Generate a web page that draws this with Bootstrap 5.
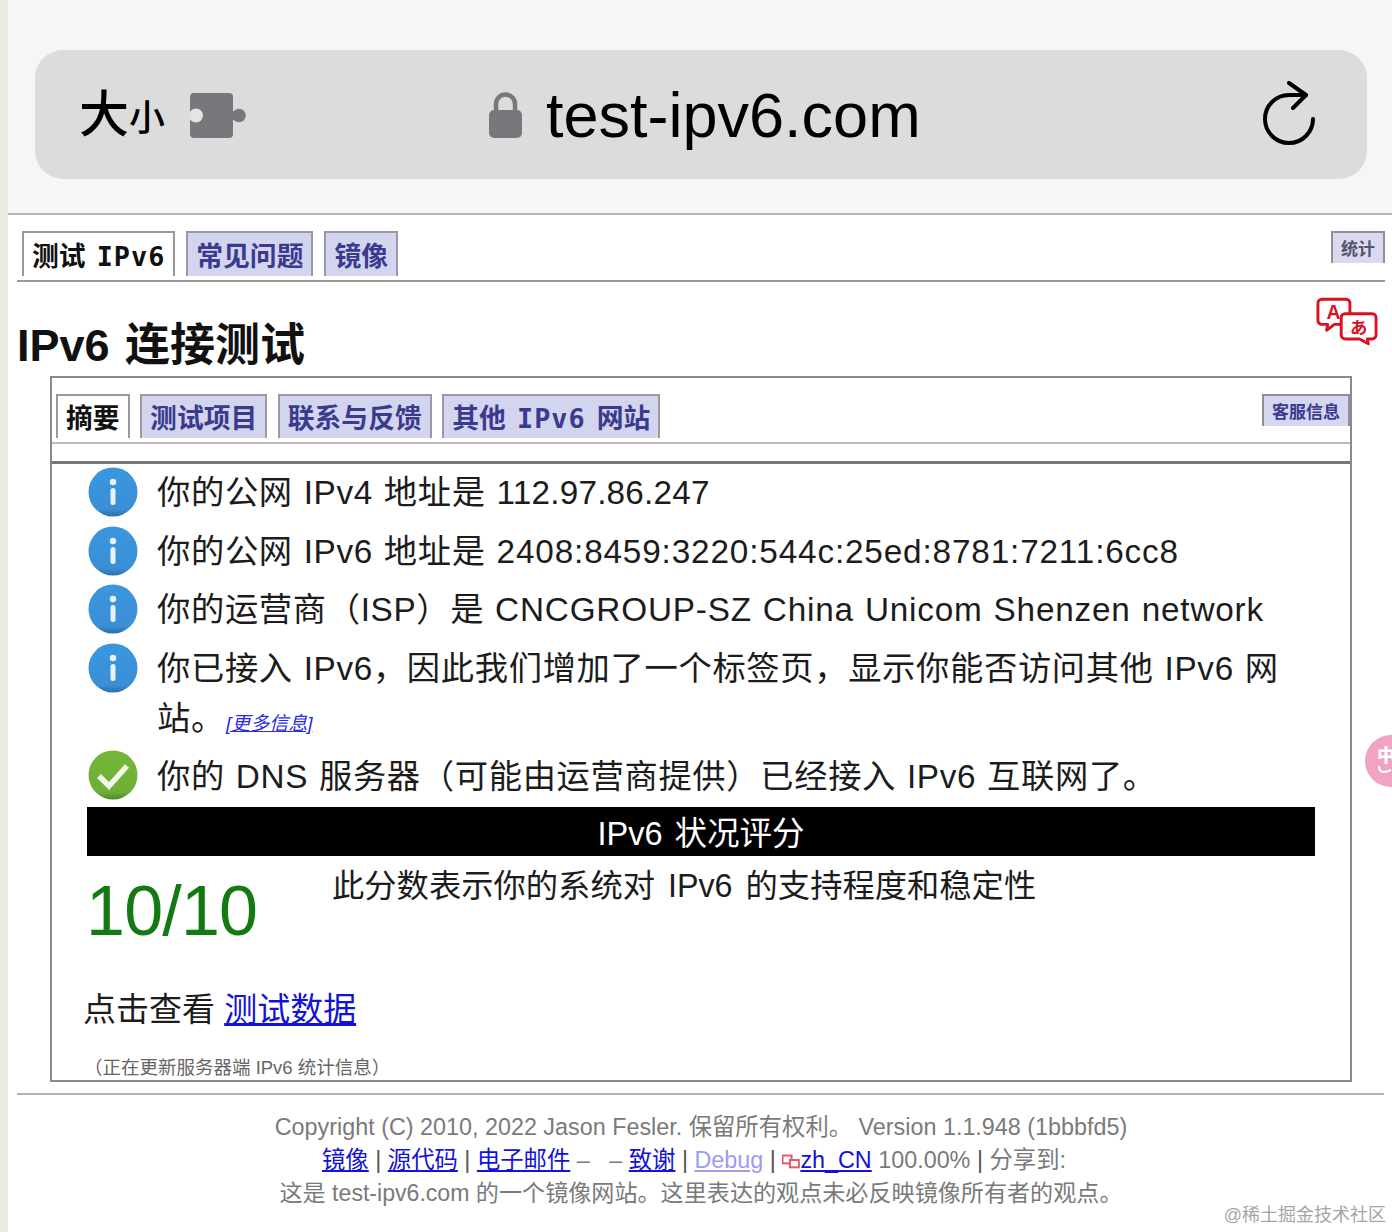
<!DOCTYPE html>
<html lang="zh-CN">
<head>
<meta charset="utf-8">
<title>test-ipv6.com</title>
<link href="https://cdn.jsdelivr.net/npm/bootstrap@5.3.0/dist/css/bootstrap.min.css" rel="stylesheet">
<style>
html,body{height:1232px;overflow:hidden}
body{background:#ece9e4;font-family:"Liberation Sans","Noto Sans CJK SC",sans-serif;color:#111;position:relative}
.page-wrap{margin-left:8px;background:#fff;height:1232px}
.chrome{height:215px;background:#f6f6f6;border-bottom:2px solid #b5b5b8;padding:50px 25px 0 27px}
.urlbar{height:129px;background:#dcdcdc;border-radius:28px;padding:0 48px 0 44px;position:relative}
.size-big{font-size:50px;line-height:1;color:#000;font-weight:500}
.size-small{font-size:36px;line-height:1;color:#000;margin-top:8px;font-weight:500}
.puzzle{margin-left:25px;margin-top:2px}
.addr{position:absolute;left:454px;top:1px;height:100%;gap:24px}
.addr span{font-size:63px;color:#000;line-height:1}
.tabline{border-bottom:2px solid #9a9a9e;gap:11px;align-items:flex-end}
.top-tabs{margin:16px 7px 0 9px;height:51px;padding:0 0 4px 5px}
.ttab{font-family:"DejaVu Sans Mono","Noto Sans CJK SC",monospace;font-size:26.8px;word-spacing:-5px;font-weight:700;height:45px;line-height:47px;padding:0 8px;border:2px solid #9a9aa6;border-bottom:0;background:#d3d4ee;color:#3a3a8e;white-space:nowrap}
.ttab.on{background:#fff;color:#111;border-color:#999}
.ttab .latin{letter-spacing:1px}
.mini{font-family:"Liberation Sans","Noto Sans CJK SC",sans-serif;margin-left:auto;align-self:flex-start;font-size:17px;font-weight:700;height:32px;line-height:34px;padding:0 8px;border:2px solid #8f8f9b;border-bottom:0;background:#d9daee;color:#55556f}
.head-row{margin:0 0 0 9px;height:94px;position:relative}
.head-row h1{font-family:"Liberation Sans","Noto Sans CJK SC",sans-serif;font-size:45px;word-spacing:3px;font-weight:700;line-height:1;padding-top:41px;margin:0;color:#111}
.lang{position:absolute;right:14px;top:15px}
.mainbox{margin:0 40px 0 42px;height:706px;border:2px solid #8a8a8a;position:relative}
.inner-tabs{padding:16px 0 0 4px;height:66px;border-bottom:2px solid #bdbdc2;align-items:flex-start;gap:10.500px}
.inner-tabs .ttab{height:44px;line-height:46px}
.inner-tabs .mini{height:32px;color:#3a3a8e;background:#d5d6f0}
.sep{height:20px;border-bottom:3px solid #77777a}
.msgs{padding:4px 35px 0 36px}
.msg{display:flex;font-size:33.3px;letter-spacing:.65px;word-spacing:1px;line-height:50px;margin-bottom:8.500px;color:#1c1c1c}
.msg svg{flex:none;margin-right:19px;margin-top:-1px}
.msg svg.ok-ic{margin-top:-2px}
.ip4{letter-spacing:.2px}
.ip6{letter-spacing:.85px}
.net{letter-spacing:.8px}
.more{font-size:19px;line-height:1;letter-spacing:0;font-style:italic;color:#2a2ae0;text-decoration:underline;margin-left:1px;white-space:nowrap}
.scorebar{background:#000;color:#fff;text-align:center;font-size:32.5px;word-spacing:3px;height:49px;line-height:54px;margin:-4px 35px 0 35px}
.score-row{margin:0 34px 0 34px;height:129px}
.score-num{width:246px;font-size:70px;color:#137a13;line-height:1;padding-top:20px;letter-spacing:-.8px}
.score-txt{font-size:32.3px;word-spacing:4px;line-height:1;padding-top:14px;color:#1c1c1c}
.clickrow{font-size:33px;line-height:50px;margin-left:31px;color:#1c1c1c}
.clickrow a,.foot a{color:#1212d8}
.updating{font-size:18.5px;color:#666;margin:21px 0 0 32px;line-height:24px}
.foot-line{margin:11px 0 0 9px;border-top:2px solid #b3b3b3;width:1367px}
.foot{text-align:center;font-size:23.35px;line-height:33px;color:#7a7a7a;padding:16px 0 0;width:1386px}
.foot .mid{padding-right:14px}
.foot .last{font-size:23.1px}
.pipe{color:#555}
.debug{color:#9c9cf0!important}
.wm{position:absolute;right:6px;top:1203px;font-size:18px;color:#a5a5a5;line-height:24px}
.cn-fab{position:absolute;left:1365px;top:735px;width:52px;height:52px;border-radius:50%;background:#f0a3c3;color:#fff;font-weight:700;padding:11px 0 0 12px}
.cn-fab b{display:block;font-size:18px;line-height:20px}
.cn-fab svg{display:block}
</style>
</head>
<body>
<div class="page-wrap">
  <div class="chrome">
    <div class="urlbar d-flex align-items-center">
      <span class="size-big">大</span><span class="size-small">小</span>
      <svg class="puzzle" width="56" height="45" viewBox="0 0 56 45"><rect x="0" y="0" width="43" height="45" rx="4" fill="#78787c"/><rect x="40" y="18" width="8" height="9" fill="#78787c"/><circle cx="49" cy="22.500" r="6.800" fill="#78787c"/><circle cx="6" cy="22.500" r="7" fill="#e4e4e4"/></svg>
      <div class="addr d-flex align-items-center">
        <svg width="33" height="47" viewBox="0 0 33 47"><path d="M7 20V12a9.500 9.500 0 0 1 19 0v8" fill="none" stroke="#78787c" stroke-width="4.500"/><rect x="0" y="18" width="33" height="28" rx="5" fill="#78787c"/></svg>
        <span>test-ipv6.com</span>
      </div>
      <svg class="ms-auto" width="56" height="68" viewBox="0 0 56 68"><path d="M50 38a24 24 0 1 1-24-24h17" fill="none" stroke="#000" stroke-width="4" stroke-linecap="round"/><path d="M26 2l17 12-13 13" fill="none" stroke="#000" stroke-width="4" stroke-linecap="round" stroke-linejoin="round"/></svg>
    </div>
  </div>

  <div class="d-flex tabline top-tabs">
    <div class="ttab on">测试 <span class="latin">IPv6</span></div>
    <div class="ttab">常见问题</div>
    <div class="ttab">镜像</div>
    <div class="mini">统计</div>
  </div>

  <div class="head-row">
    <h1>IPv6 连接测试</h1>
    <svg class="lang" width="62" height="49" viewBox="0 0 64 50">
      <path d="M6 2h25a4 4 0 0 1 4 4v18a4 4 0 0 1-4 4H19l-8 6 1-6H6a4 4 0 0 1-4-4V6a4 4 0 0 1 4-4z" fill="#fff" stroke="#d8121f" stroke-width="3" stroke-linejoin="round"/>
      <text x="18" y="22" font-size="20" font-weight="700" fill="#d8121f" text-anchor="middle" font-family="Liberation Sans">A</text>
      <path d="M30 17h28a4 4 0 0 1 4 4v18a4 4 0 0 1-4 4h-5l1 5-9-5H30a4 4 0 0 1-4-4V21a4 4 0 0 1 4-4z" fill="#fff" stroke="#d8121f" stroke-width="3" stroke-linejoin="round"/>
      <text x="44" y="38" font-size="18" font-weight="700" fill="#d8121f" text-anchor="middle" font-family="Noto Sans CJK JP">あ</text>
    </svg>
  </div>

  <div class="mainbox">
    <div class="d-flex inner-tabs">
      <div class="ttab on">摘要</div>
      <div class="ttab">测试项目</div>
      <div class="ttab">联系与反馈</div>
      <div class="ttab">其他 <span class="latin">IPv6</span> 网站</div>
      <div class="mini">客服信息</div>
    </div>
    <div class="sep"></div>
    <div class="msgs">
      <div class="msg"><svg width="50" height="50"><use href="#ic-info"/></svg><div>你的公网 IPv4 地址是 <span class="ip4">112.97.86.247</span></div></div>
      <div class="msg"><svg width="50" height="50"><use href="#ic-info"/></svg><div>你的公网 IPv6 地址是 <span class="ip6">2408:8459:3220:544c:25ed:8781:7211:6cc8</span></div></div>
      <div class="msg"><svg width="50" height="50"><use href="#ic-info"/></svg><div>你的运营商（ISP）是 <span class="net">CNCGROUP-SZ China Unicom Shenzen network</span></div></div>
      <div class="msg"><svg width="50" height="50"><use href="#ic-info"/></svg><div>你已接入 IPv6，因此我们增加了一个标签页，显示你能否访问其他 IPv6 网站。<a class="more" href="#">[更多信息]</a></div></div>
      <div class="msg"><svg class="ok-ic" width="50" height="50"><use href="#ic-ok"/></svg><div>你的 DNS 服务器（可能由运营商提供）已经接入 IPv6 互联网了。</div></div>
    </div>
    <div class="scorebar">IPv6 状况评分</div>
    <div class="d-flex score-row">
      <div class="score-num">10/10</div>
      <div class="score-txt">此分数表示你的系统对 IPv6 的支持程度和稳定性</div>
    </div>
    <div class="clickrow">点击查看 <a href="#">测试数据</a></div>
    <div class="updating">（正在更新服务器端 IPv6 统计信息）</div>
  </div>

  <div class="foot-line"></div>
  <div class="foot">
    <div>Copyright (C) 2010, 2022 Jason Fesler. 保留所有权利。 Version 1.1.948 (1bbbfd5)</div>
    <div class="mid"><a href="#">镜像</a> <span class="pipe">|</span> <a href="#">源代码</a> <span class="pipe">|</span> <a href="#">电子邮件</a> – &nbsp; – <a href="#">致谢</a> <span class="pipe">|</span> <a class="debug" href="#">Debug</a> <span class="pipe">|</span> <svg width="18" height="16" viewBox="0 0 64 50"><rect x="2" y="2" width="32" height="28" fill="#fff" stroke="#e2596a" stroke-width="7"/><rect x="28" y="18" width="32" height="26" fill="#fff" stroke="#e2596a" stroke-width="7"/></svg><a href="#">zh_CN</a> 100.00% <span class="pipe">|</span> 分享到:</div>
    <div class="last">这是 test-ipv6.com 的一个镜像网站。这里表达的观点未必反映镜像所有者的观点。</div>
  </div>
</div>

<div class="cn-fab"><b>中</b><svg width="15" height="7" viewBox="0 0 15 7"><path d="M2 0c0 4 2 6 5 6s5-1 7-2" fill="none" stroke="#fff" stroke-width="2"/></svg></div>
<div class="wm">@稀土掘金技术社区</div>

<svg width="0" height="0" class="position-absolute">
  <defs>
    <linearGradient id="gb" x1="0" y1="0" x2="0" y2="1"><stop offset="0" stop-color="#3a97de"/><stop offset=".85" stop-color="#3a8fd6"/><stop offset="1" stop-color="#2b6fa8"/></linearGradient>
    <linearGradient id="gg" x1="0" y1="0" x2="0" y2="1"><stop offset="0" stop-color="#74b83a"/><stop offset=".85" stop-color="#6eae35"/><stop offset="1" stop-color="#4f8a2a"/></linearGradient>
    <symbol id="ic-info" viewBox="0 0 50 50">
      <circle cx="25" cy="25" r="24.500" fill="url(#gb)"/>
      <circle cx="25" cy="15" r="3.200" fill="#e8f2fb"/>
      <rect x="22.500" y="21" width="5" height="17" rx="2.500" fill="#e8f2fb"/>
    </symbol>
    <symbol id="ic-ok" viewBox="0 0 50 50">
      <circle cx="25" cy="25" r="24.500" fill="url(#gg)"/>
      <path d="M11 26l10 10 18-20" fill="none" stroke="#f2f7ec" stroke-width="5.500" stroke-linejoin="miter"/>
    </symbol>
  </defs>
</svg>
<script src="https://cdn.jsdelivr.net/npm/bootstrap@5.3.0/dist/js/bootstrap.bundle.min.js"></script>
</body>
</html>
